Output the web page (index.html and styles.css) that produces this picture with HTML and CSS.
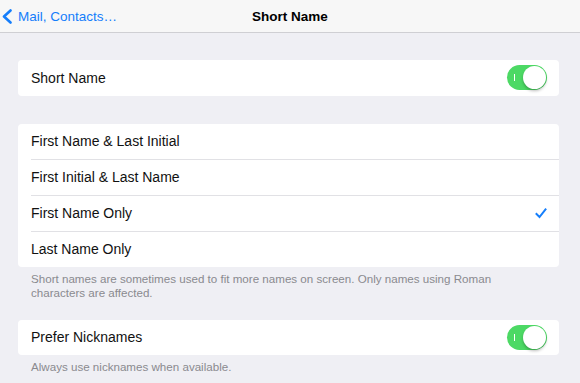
FILE: index.html
```html
<!DOCTYPE html>
<html lang="en">
<head>
  <meta charset="UTF-8" />
  <meta name="viewport" content="width=device-width, initial-scale=1.0"/>
  <title>Short Name</title>
  <link rel="stylesheet" href="styles.css">
</head>
<body>
  <div class="navbar">
    <a class="back" href="#">
      <svg class="chevron" width="10" height="15" viewBox="0 0 10 15">
        <path d="M8.5 1.5 L2 7.5 L8.5 13.5" fill="none" stroke="#157efb" stroke-width="2.6" stroke-linecap="round" stroke-linejoin="round"/>
      </svg>
      <span>Mail, Contacts…</span>
    </a>
    <div class="title">Short Name</div>
    <div></div>
  </div>

  <div class="content">
    <!-- Short name switch -->
    <div class="card first">
      <div class="row">
        <span>Short Name</span>
        <div class="toggle on"><span class="mark"></span><span class="knob"></span></div>
      </div>
    </div>

    <!-- Format options -->
    <div class="card group">
      <div class="row">First Name &amp; Last Initial</div>
      <div class="row">First Initial &amp; Last Name</div>
      <div class="row">
        <span>First Name Only</span>
        <svg class="check" width="12" height="11" viewBox="0 0 12 11">
          <path d="M1.5 6 L4.5 9 L10.5 1.5" fill="none" stroke="#157efb" stroke-width="2" stroke-linecap="square"/>
        </svg>
      </div>
      <div class="row">Last Name Only</div>
    </div>
    <p class="note">Short names are sometimes used to fit more names on screen. Only names using Roman characters are affected.</p>

    <!-- Nicknames -->
    <div class="card nick">
      <div class="row">
        <span>Prefer Nicknames</span>
        <div class="toggle on"><span class="mark"></span><span class="knob"></span></div>
      </div>
    </div>
    <p class="note">Always use nicknames when available.</p>
  </div>
</body>
</html>
```

FILE: styles.css
```css
body {
  margin: 0;
  background: #efeff4;
  font-family: "Liberation Sans", Arial, sans-serif;
  color: #111;
}
.navbar {
  display: grid;
  grid-template-columns: 1fr auto 1fr;
  align-items: center;
  height: 32px;
  background: #f7f7f7;
  border-bottom: 1px solid #cfcfd3;
}
.back {
  display: flex;
  align-items: center;
  gap: 6px;
  padding-left: 2px;
  color: #157efb;
  text-decoration: none;
  font-size: 13.5px;
}
.title {
  font-weight: bold;
  font-size: 13.5px;
  color: #000;
}
.content {
  padding: 0 21px 0 18px;
}
.card {
  background: white;
  border-radius: 4px;
}
.first {
  margin-top: 27px;
}
.group {
  margin-top: 28px;
}
.nick {
  margin-top: 20px;
}
.row {
  display: flex;
  align-items: center;
  justify-content: space-between;
  height: 35px;
  margin-left: 13px;
  padding-right: 12px;
  font-size: 14px;
  line-height: 16px;
  padding-bottom: 1px;
  box-sizing: border-box;
}
.first .row {
  height: 36px;
}
.row + .row {
  height: 36px;
  border-top: 1px solid #e1e1e5;
}
.toggle {
  position: relative;
  width: 40px;
  height: 25px;
  border-radius: 13px;
  background: #4cd964;
}
.toggle .mark {
  position: absolute;
  left: 7px;
  top: 9px;
  width: 1px;
  height: 7px;
  background: white;
}
.toggle .knob {
  position: absolute;
  right: 1px;
  top: 1px;
  width: 23px;
  height: 23px;
  border-radius: 50%;
  background: white;
  box-shadow: 0 2px 3px rgba(0, 0, 0, 0.25);
}
.note {
  margin: 0;
  padding: 5px 13px 0;
  font-size: 11.6px;
  line-height: 14px;
  color: #8a8a8f;
}
```
